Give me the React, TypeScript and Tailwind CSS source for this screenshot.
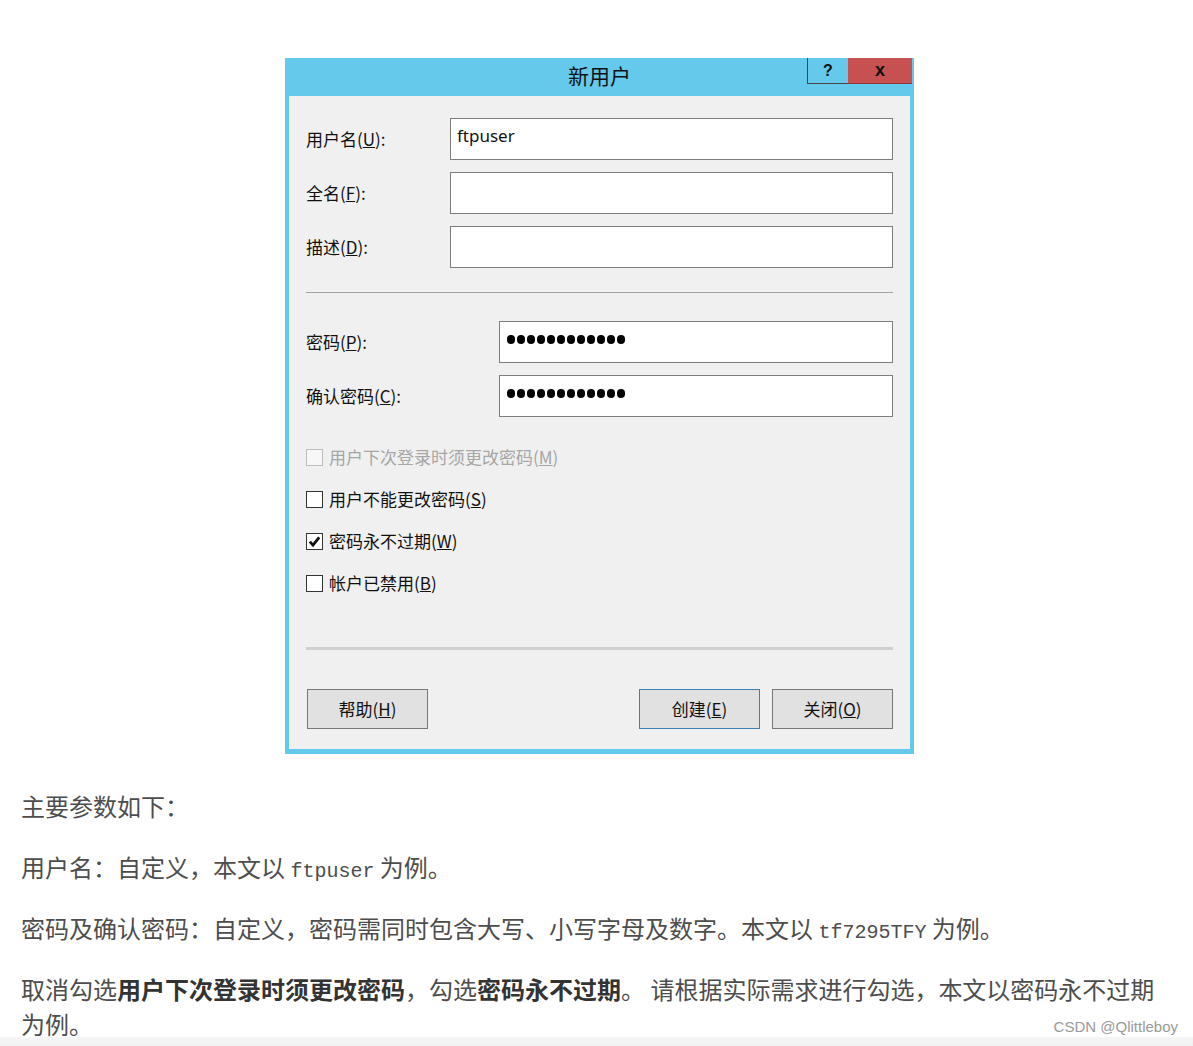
import React from "react";

const cjk = { fontFamily: '"Noto Sans CJK SC", "Noto Sans", sans-serif' };

function Label({ text, k }: { text: string; k: string }) {
  return (
    <span className="text-[17px] text-[#111]" style={cjk}>
      {text}(<u>{k}</u>):
    </span>
  );
}

function Field({ label, k, labelW, value, dots }: { label: string; k: string; labelW: string; value?: string; dots?: boolean }) {
  return (
    <div className="flex items-center">
      <div className={labelW}>
        <Label text={label} k={k} />
      </div>
      <div className="flex-1 h-[42px] bg-white border border-[#7d7d7d] px-[6px] pt-[4px]">
        {dots ? (
          <div className="flex gap-[2px] pt-[9px] pl-[1px]">
            {Array.from({ length: 12 }).map((_, i) => (
              <span key={i} className="w-[8px] h-[9px] rounded-full bg-black" />
            ))}
          </div>
        ) : (
          <span className="text-[17px] text-[#111]" style={{ fontFamily: '"Noto Sans", sans-serif' }}>
            {value}
          </span>
        )}
      </div>
    </div>
  );
}

function Check({ text, k, checked, disabled }: { text: string; k: string; checked?: boolean; disabled?: boolean }) {
  return (
    <div className="h-[42px] flex items-center gap-[6px]">
      <span
        className={
          disabled
            ? "w-[17px] h-[17px] border border-[#bdbdbd] bg-[#f7f7f7]"
            : "w-[17px] h-[17px] border border-[#333] bg-white flex items-center justify-center"
        }
      >
        {checked && (
          <svg width="13" height="13" viewBox="0 0 13 13">
            <path d="M1.8 6.6 L5 10.2 L11.2 2.4" fill="none" stroke="#111" strokeWidth="2.8" />
          </svg>
        )}
      </span>
      <span className={disabled ? "text-[17px] text-[#a6a6a6]" : "text-[17px] text-[#111]"} style={cjk}>
        {text}(<u>{k}</u>)
      </span>
    </div>
  );
}

function Btn({ text, k, primary }: { text: string; k: string; primary?: boolean }) {
  return (
    <div
      className={
        primary
          ? "w-[121px] h-[40px] bg-[#e1e1e1] border-[1.5px] border-[#3c7fb1] flex items-center justify-center"
          : "w-[121px] h-[40px] bg-[#e1e1e1] border-[1.5px] border-[#777] flex items-center justify-center"
      }
    >
      <span className="text-[17px] text-[#111]" style={cjk}>
        {text}(<u>{k}</u>)
      </span>
    </div>
  );
}

function Dialog() {
  return (
    <div className="w-[629px] bg-[#64c9ea] px-[4px] pb-[5px]">
      <div className="relative h-[38px] flex items-center justify-center">
        <span className="text-[21px] leading-none text-[#111] pb-[3px]" style={cjk}>
          新用户
        </span>
        <div className="absolute right-[-2px] top-0 flex h-[26px]">
          <div className="w-[41px] border-l-[1.5px] border-b-[1.5px] border-[#444] flex items-center justify-center">
            <span className="text-[16px] font-bold text-[#111]" style={{ fontFamily: '"Liberation Sans", sans-serif' }}>?</span>
          </div>
          <div className="w-[64px] bg-[#c75050] border-b border-[#8b3a3a] flex items-center justify-center">
            <span className="text-[18px] font-bold leading-none text-[#111] pb-[2px]" style={{ fontFamily: '"Liberation Sans", sans-serif' }}>x</span>
          </div>
        </div>
      </div>
      <div className="bg-[#f0f0f0] px-[17px] pt-[22px] pb-[20px]">
        <div className="flex flex-col gap-[12px]">
          <Field label="用户名" k="U" labelW="w-[144px]" value="ftpuser" />
          <Field label="全名" k="F" labelW="w-[144px]" value="" />
          <Field label="描述" k="D" labelW="w-[144px]" value="" />
        </div>
        <div className="mt-[24px] h-[1px] bg-[#a3a3a3]" />
        <div className="mt-[28px] flex flex-col gap-[12px]">
          <Field label="密码" k="P" labelW="w-[193px]" dots />
          <Field label="确认密码" k="C" labelW="w-[193px]" dots />
        </div>
        <div className="mt-[19px] flex flex-col">
          <Check text="用户下次登录时须更改密码" k="M" disabled />
          <Check text="用户不能更改密码" k="S" />
          <Check text="密码永不过期" k="W" checked />
          <Check text="帐户已禁用" k="B" />
        </div>
        <div className="mt-[43px] h-[3px] bg-[#d0d0d0]" />
        <div className="mt-[39px] flex items-center">
          <div className="pl-[1px]">
            <Btn text="帮助" k="H" />
          </div>
          <div className="flex-1" />
          <div className="flex gap-[12px]">
            <Btn text="创建" k="E" primary />
            <Btn text="关闭" k="O" />
          </div>
        </div>
      </div>
    </div>
  );
}

const mono = { fontFamily: '"Liberation Mono", monospace' };

export default function App() {
  return (
    <div className="relative h-[1046px] overflow-hidden bg-white">
      <div className="pt-[58px] flex justify-center pl-[6px]">
        <Dialog />
      </div>
      <div className="px-[21px] mt-[34px] text-[24px] leading-[35px] text-[#4d4d4d] flex flex-col gap-[26px]" style={cjk}>
        <p className="h-[35px]">主要参数如下：</p>
        <p className="h-[35px]">
          用户名：自定义，本文以 <span className="text-[20px] leading-none" style={mono}>ftpuser</span> 为例。
        </p>
        <p className="h-[35px]">
          密码及确认密码：自定义，密码需同时包含大写、小写字母及数字。本文以 <span className="text-[20px] leading-none" style={mono}>tf7295TFY</span> 为例。
        </p>
        <p>
          取消勾选<b className="font-bold text-[#333]">用户下次登录时须更改密码</b>，勾选<b className="font-bold text-[#333]">密码永不过期</b>。 请根据实际需求进行勾选，本文以密码永不过期为例。
        </p>
      </div>
      <div className="absolute left-0 right-0 bottom-0 h-[9px] bg-gradient-to-b from-[#f6f6f6] to-[#f0f0f0]" />
      <div
        className="absolute right-[15px] bottom-[8px] text-[15px] text-[#9a9a9a]"
        style={{ fontFamily: '"Liberation Sans", sans-serif' }}
      >
        CSDN @Qlittleboy
      </div>
    </div>
  );
}
